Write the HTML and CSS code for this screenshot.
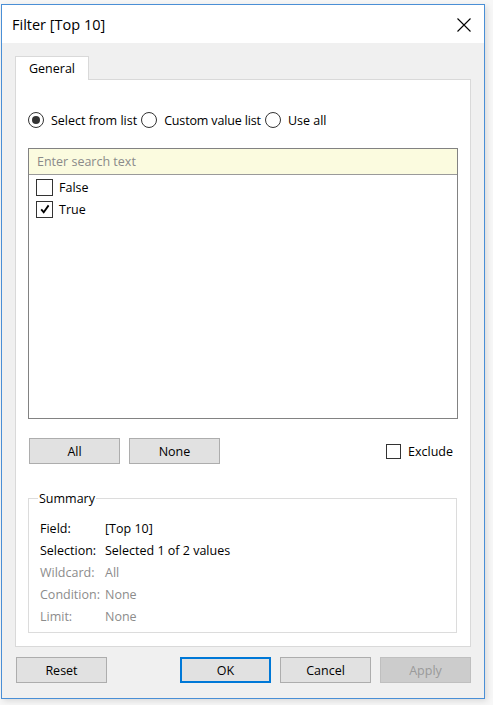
FILE: index.html
```html
<!DOCTYPE html>
<html>
<head>
<meta charset="utf-8">
<link rel="stylesheet" href="styles.css">
</head>
<body>
<div class="window">
  <div class="titlebar">
    <span class="title">Filter [Top 10]</span>
    <svg class="close" width="14" height="14" viewBox="0 0 14 14"><path d="M0.5 0.5 L13.5 13.5 M13.5 0.5 L0.5 13.5" stroke="#000" stroke-width="1.1" fill="none"/></svg>
  </div>
  <div class="content">
    <div class="tabs"><div class="tab">General</div></div>
    <div class="panel">
      <div class="radios">
        <label class="radio-item"><span class="radio checked"><span class="dot"></span></span>Select from list</label>
        <label class="radio-item"><span class="radio"></span><span class="tight">Custom value list</span></label>
        <label class="radio-item"><span class="radio"></span>Use all</label>
      </div>
      <div class="listbox">
        <div class="search">Enter search text</div>
        <div class="items">
          <div class="item"><span class="cb"></span>False</div>
          <div class="item"><span class="cb"><svg width="14" height="14" viewBox="0 0 14 14"><path d="M3.2 7.4 L5.7 10.2 L10.6 3.4" stroke="#000" stroke-width="1.8" fill="none"/></svg></span>True</div>
        </div>
      </div>
      <div class="btnrow">
        <button class="btn">All</button>
        <button class="btn">None</button>
        <span class="spacer"></span>
        <label class="exclude"><span class="cb"></span>Exclude</label>
      </div>
      <fieldset class="summary">
        <legend>Summary</legend>
        <div class="srow"><span class="lbl">Field:</span><span>[Top 10]</span></div>
        <div class="srow"><span class="lbl">Selection:</span><span>Selected 1 of 2 values</span></div>
        <div class="srow dim"><span class="lbl">Wildcard:</span><span>All</span></div>
        <div class="srow dim"><span class="lbl">Condition:</span><span>None</span></div>
        <div class="srow dim"><span class="lbl">Limit:</span><span>None</span></div>
      </fieldset>
    </div>
    <div class="footer">
      <button class="btn">Reset</button>
      <span class="spacer"></span>
      <button class="btn default">OK</button>
      <button class="btn">Cancel</button>
      <button class="btn disabled">Apply</button>
    </div>
  </div>
</div>
</body>
</html>
```
FILE: styles.css
```css
* { box-sizing: border-box; }
html, body { margin: 0; padding: 0; }
body {
  background: #f7f7f7;
  font-family: "Open Sans", "Noto Sans", sans-serif;
  font-size: 12.5px;
  color: #000;
  width: 493px;
  height: 705px;
  overflow: hidden;
}
.window {
  margin: 4px 0 0 1px;
  width: 484px;
  height: 695px;
  border: 1px solid #4a8fd6;
  background: #f0f0f0;
  display: flex;
  flex-direction: column;
  box-shadow: 2px 2px 6px rgba(0,0,0,0.12);
}
.titlebar {
  height: 38px;
  background: #fff;
  display: flex;
  align-items: center;
  padding: 0 13px 0 10px;
  flex-shrink: 0;
}
.title { font-size: 14.5px; flex: 1; padding-top: 1px; }
.close { display: block; margin-top: 1px; }
.content {
  flex: 1;
  padding: 13px 13px 0 13px;
  display: flex;
  flex-direction: column;
}
.tabs { display: flex; height: 23px; }
.tab {
  width: 74px;
  height: 24px;
  background: #fff;
  border: 1px solid #d9d9d9;
  border-bottom: none;
  text-align: center;
  line-height: 24px;
  position: relative;
  z-index: 1;
}
.panel {
  height: 568px;
  background: #fff;
  border: 1px solid #d9d9d9;
  padding: 32px 12px 0 12px;
  display: flex;
  flex-direction: column;
}
.radios { display: flex; height: 16px; align-items: center; }
.radio-item { display: flex; align-items: center; margin-right: 4px; }
.tight { letter-spacing: -0.15px; }
.radio {
  width: 16px; height: 16px;
  border: 1px solid #333;
  border-radius: 50%;
  margin-right: 7px;
  display: flex; align-items: center; justify-content: center;
}
.radio .dot { width: 8px; height: 8px; border-radius: 50%; background: #333; }
.listbox {
  margin-top: 20px;
  height: 271px;
  border: 1px solid #828282;
  width: 430px;
}
.search {
  height: 26px;
  background: #fbfbdf;
  border-bottom: 1px solid #9a9a9a;
  color: #8a8a8a;
  padding-left: 8px;
  line-height: 26px;
}
.items { padding: 1px 0 0 7px; }
.item { display: flex; align-items: center; height: 22px; }
.cb {
  width: 17px; height: 17px;
  border: 1px solid #333;
  background: #fff;
  margin-right: 6px;
  display: flex; align-items: center; justify-content: center;
}
.cb svg { display: block; }
.btnrow {
  margin-top: 19px;
  height: 26px;
  display: flex;
  align-items: center;
  padding: 0 5px 0 1px;
}
.btn {
  width: 91px;
  height: 26px;
  background: #e1e1e1;
  border: 1px solid #adadad;
  font-family: inherit;
  font-size: 12.5px;
  color: #000;
  padding: 0;
  margin: 0 9px 0 0;
}
.btnrow .btn:last-of-type { margin-right: 0; }
.spacer { flex: 1; }
.exclude { display: flex; align-items: center; }
.exclude .cb { width: 15px; height: 15px; margin-right: 7px; }
.summary {
  margin: 26px 0 0 0;
  height: 143px;
  width: 429px;
  border: 1px solid #dcdcdc;
  padding: 10px 0 0 11px;
}
.summary legend { padding: 0 1px 0 1px; margin-left: -2px; line-height: 17px; }
.srow { display: flex; height: 22px; align-items: center; }
.lbl { width: 65px; }
.dim { color: #8c8c8c; }
.footer {
  margin-top: 10px;
  display: flex;
  padding: 0 0 0 1px;
}
.footer .btn { height: 26px; }
.footer .btn:last-child { margin-right: 0; }
.btn.default { border: 2px solid #0078d7; }
.btn.disabled { background: #cccccc; border-color: #bfbfbf; color: #9a9a9a; }
```
